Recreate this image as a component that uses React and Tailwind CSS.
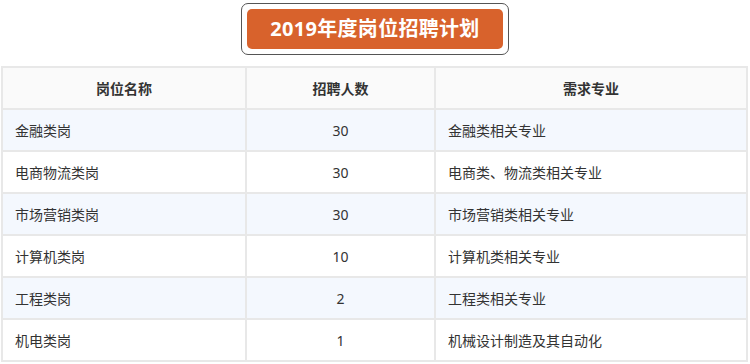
const rows = [
  { name: "金融类岗", count: "30", major: "金融类相关专业" },
  { name: "电商物流类岗", count: "30", major: "电商类、物流类相关专业" },
  { name: "市场营销类岗", count: "30", major: "市场营销类相关专业" },
  { name: "计算机类岗", count: "10", major: "计算机类相关专业" },
  { name: "工程类岗", count: "2", major: "工程类相关专业" },
  { name: "机电类岗", count: "1", major: "机械设计制造及其自动化" },
];

export default function App() {
  return (
    <div
      className="w-[750px] h-[364px] bg-white text-[#333] overflow-hidden"
      style={{ fontFamily: '"Noto Sans", "Noto Sans CJK SC", sans-serif' }}
    >
      {/* 标题 */}
      <div className="flex justify-center pt-[3px]">
        <div className="border-[1.5px] border-[#555] rounded-[7px] p-[5px]">
          <div className="h-[40px] px-[23px] flex items-center bg-[#d8622c] rounded-[5px] text-white text-[20px] font-bold tracking-[0.3px]">
            2019年度岗位招聘计划
          </div>
        </div>
      </div>

      {/* 表格 */}
      <table className="mt-[11px] ml-[1px] w-[747px] border-collapse text-[14px] table-fixed">
        <colgroup>
          <col className="w-[244px]" />
          <col className="w-[189px]" />
          <col />
        </colgroup>
        <thead>
          <tr className="h-[42px] bg-[#fafafa]">
            <th className="border-2 border-[#e8e8e8] font-semibold text-center">岗位名称</th>
            <th className="border-2 border-[#e8e8e8] font-semibold text-center">招聘人数</th>
            <th className="border-2 border-[#e8e8e8] font-semibold text-center">需求专业</th>
          </tr>
        </thead>
        <tbody>
          {rows.map((r, i) => (
            <tr key={r.name} className={`h-[42px] ${i % 2 === 0 ? "bg-[#f4f8fe]" : "bg-white"}`}>
              <td className="border-2 border-[#e8e8e8] pl-[12px]">{r.name}</td>
              <td className="border-2 border-[#e8e8e8] text-center">{r.count}</td>
              <td className="border-2 border-[#e8e8e8] pl-[12px]">{r.major}</td>
            </tr>
          ))}
        </tbody>
      </table>
    </div>
  );
}
